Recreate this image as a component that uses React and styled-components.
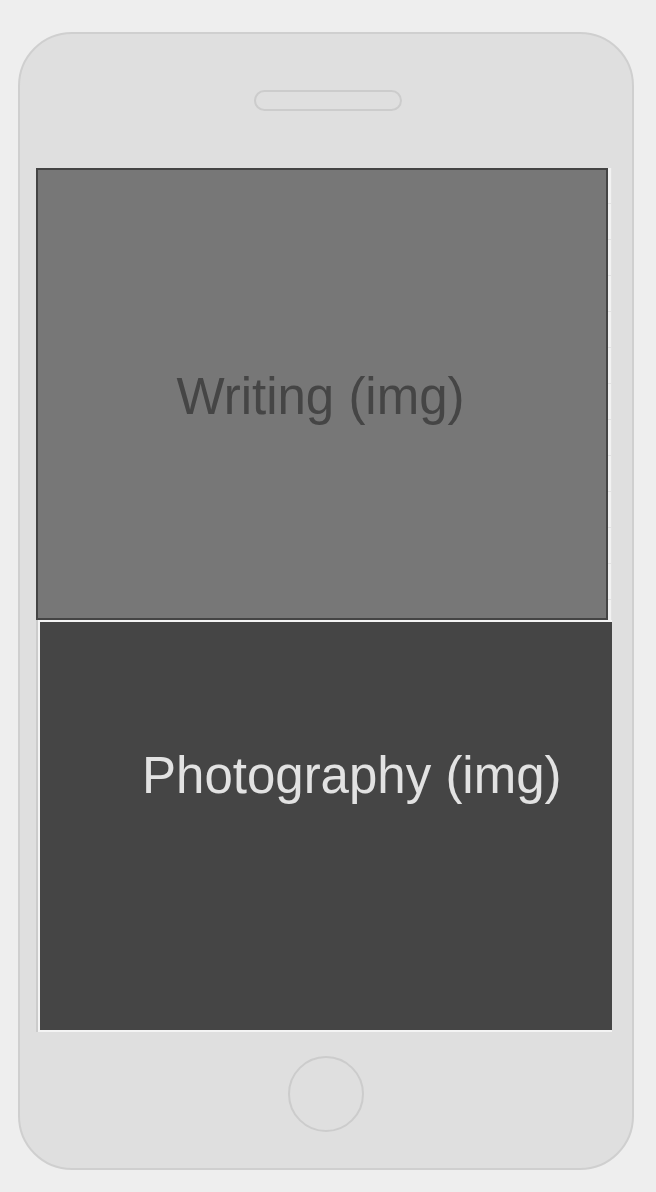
import React from "react";
import styled, { createGlobalStyle } from "styled-components";

const Global = createGlobalStyle`
  html, body { margin: 0; padding: 0; background: #eeeeee; }
  body { font-family: "Liberation Sans", Arial, sans-serif; }
`;

const Page = styled.div`
  width: 656px;
  height: 1192px;
  padding: 32px 0 0 18px;
  box-sizing: border-box;
`;

const Phone = styled.div`
  width: 616px;
  height: 1138px;
  box-sizing: border-box;
  border: 2px solid #cfcfcf;
  border-radius: 54px;
  background: #dfdfdf;
  display: flex;
  flex-direction: column;
  align-items: flex-start;
`;

const Speaker = styled.div`
  width: 148px;
  height: 21px;
  box-sizing: border-box;
  margin: 56px 0 0 234px;
  border: 2px solid #cccccc;
  border-radius: 11px;
`;

const Screen = styled.div`
  width: 576px;
  height: 864px;
  margin: 57px 0 0 16px;
  overflow: hidden;
  background-color: #f2f2f2;
  background-image:
    linear-gradient(to right, #e2e2e2 1px, transparent 1px),
    linear-gradient(to bottom, #e2e2e2 1px, transparent 1px);
  background-size: 36px 36px;
  background-position: 35px 35px;
  display: flex;
  flex-direction: column;
`;

const Writing = styled.div`
  width: 572px;
  height: 452px;
  box-sizing: border-box;
  flex-shrink: 0;
  border: 2px solid #444444;
  background: #777777;
  display: flex;
  align-items: center;
  justify-content: center;
  padding: 6px 3px 0 0;
`;

const PhotoRow = styled.div`
  flex: 1;
  display: flex;
  border-left: 2px solid #cccccc;
`;

const Photo = styled.div`
  width: 580px;
  flex-shrink: 0;
  box-sizing: border-box;
  border: 2px solid #f4f4f4;
  border-right: none;
  background: #454545;
  padding: 125px 0 0 102px;
`;

const Label = styled.span`
  font-family: "Liberation Sans", Arial, sans-serif;
  font-size: 51px;
  line-height: 1.15;
  color: ${(p) => p.$color};
  white-space: nowrap;
`;

const Home = styled.div`
  width: 76px;
  height: 76px;
  box-sizing: border-box;
  margin: 24px 0 0 268px;
  border: 2px solid #cccccc;
  border-radius: 50%;
`;

export default function App() {
  return (
    <>
      <Global />
      <Page>
        <Phone>
          <Speaker />
          <Screen>
            <Writing>
              <Label $color="#454545">Writing (img)</Label>
            </Writing>
            <PhotoRow>
              <Photo>
                <Label $color="#e2e2e2">Photography (img)</Label>
              </Photo>
            </PhotoRow>
          </Screen>
          <Home />
        </Phone>
      </Page>
    </>
  );
}
